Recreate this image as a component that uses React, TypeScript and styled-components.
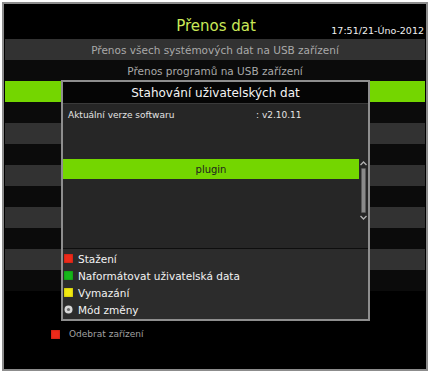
import React from "react";
import styled, { createGlobalStyle } from "styled-components";

const GlobalStyle = createGlobalStyle`
	html, body {
		margin: 0;
		padding: 0;
		background: #ffffff;
	}
	* {
		box-sizing: border-box;
	}
`;

const rows = [
	"Přenos všech systémových dat na USB zařízení",
	"Přenos programů na USB zařízení",
	"",
	"",
	"",
	"",
	"",
	"",
	"",
	"",
	"",
	"",
];

const legend = [
	{ color: "#ee2a1a", label: "Stažení" },
	{ color: "#16b81a", label: "Naformátovat uživatelská data" },
	{ color: "#f2ea10", label: "Vymazání" },
	{ color: "gear", label: "Mód změny" },
];

const App: React.FC = () => {
	return (
		<>
			<GlobalStyle />
			<Frame>
				<Header>
					<Title>Přenos dat</Title>
					<Clock>17:51/21-Úno-2012</Clock>
				</Header>
				<List>
					{rows.map((text, index) => (
						<Row key={index} dark={index % 2 === 1} selected={index === 2}>
							{text}
						</Row>
					))}
				</List>
				<Footer>
					<Swatch color="#ee2a1a" />
					<FooterText>Odebrat zařízení</FooterText>
				</Footer>

				<Dialog>
					<DialogHeader>Stahování uživatelských dat</DialogHeader>
					<DialogBody>
						<Info>
							<span>Aktuální verze softwaru</span>
							<span>: v2.10.11</span>
						</Info>
						<ListArea>
							<Items>
								<Item>plugin</Item>
							</Items>
							<Scrollbar>
								<svg width="9" height="7" viewBox="0 0 9 7">
									<path d="M1.5 5 L4.5 2 L7.5 5" stroke="#b0b0b0" strokeWidth="1.4" fill="none" />
								</svg>
								<Thumb />
								<svg width="9" height="7" viewBox="0 0 9 7">
									<path d="M1.5 2 L4.5 5 L7.5 2" stroke="#b0b0b0" strokeWidth="1.4" fill="none" />
								</svg>
							</Scrollbar>
						</ListArea>
					</DialogBody>
					<Legend>
						{legend.map((item) => (
							<LegendItem key={item.label}>
								{item.color === "gear" ? (
									<svg width="9" height="9" viewBox="0 0 9 9">
										<circle cx="4.5" cy="4.5" r="4" fill="#d8d8d8" />
										<circle cx="4.5" cy="4.5" r="1.6" fill="#6a6a6a" />
									</svg>
								) : (
									<Swatch color={item.color} />
								)}
								<span>{item.label}</span>
							</LegendItem>
						))}
					</Legend>
				</Dialog>
			</Frame>
		</>
	);
};

export default App;

const Frame = styled.div`
	position: relative;
	margin: 2px;
	width: 426px;
	height: 369px;
	border: 2px solid #8c8c8c;
	background: #000000;
	font-family: "DejaVu Sans", Verdana, sans-serif;
	display: flex;
	flex-direction: column;
`;

const Header = styled.div`
	height: 35px;
	display: flex;
	align-items: center;
	justify-content: center;
	position: relative;
`;

const Title = styled.div`
	font-size: 15px;
	color: #c9e858;
	margin-top: 8px;
	margin-left: 2px;
`;

const Clock = styled.div`
	position: absolute;
	right: 2px;
	bottom: 3px;
	font-size: 9.5px;
	color: #f0f0f0;
`;

const List = styled.div`
	display: flex;
	flex-direction: column;
	padding: 0 1px;
`;

type RowProps = { dark: boolean; selected: boolean };

const Row = styled.div<RowProps>`
	height: 21px;
	display: flex;
	align-items: center;
	justify-content: center;
	font-size: 10.5px;
	color: #a9a9a9;
	background: ${(p) => (p.selected ? "#74d600" : p.dark ? "#0b0b0b" : "#323232")};
`;

const Footer = styled.div`
	display: flex;
	align-items: center;
	gap: 9px;
	padding: 38px 0 0 47px;
`;

const Swatch = styled.div<{ color: string }>`
	width: 9px;
	height: 9px;
	background: ${(p) => p.color};
	box-shadow: inset 0 0 2px rgba(0, 0, 0, 0.35);
	flex-shrink: 0;
`;

const FooterText = styled.span`
	font-size: 9px;
	color: #a0a0a0;
`;

const Dialog = styled.div`
	position: absolute;
	left: 57px;
	top: 76px;
	width: 309px;
	height: 241px;
	border: 2px solid #8e8e8e;
	background: #262626;
	display: flex;
	flex-direction: column;
`;

const DialogHeader = styled.div`
	height: 22px;
	background: #050505;
	border-bottom: 1px solid #3a3a3a;
	color: #f4f4f4;
	font-size: 12px;
	display: flex;
	align-items: center;
	justify-content: center;
`;

const DialogBody = styled.div`
	height: 145px;
	border-bottom: 1px solid #0e0e0e;
	display: flex;
	flex-direction: column;
`;

const Info = styled.div`
	height: 55px;
	display: grid;
	grid-template-columns: 188px 1fr;
	padding: 6px 5px 0;
	font-size: 9px;
	color: #e4e4e4;
`;

const ListArea = styled.div`
	height: 62px;
	display: flex;
`;

const Items = styled.div`
	flex: 1;
	display: flex;
	flex-direction: column;
`;

const Item = styled.div`
	height: 20px;
	background: #74d600;
	color: #1e1e1e;
	font-size: 10px;
	display: flex;
	align-items: center;
	justify-content: center;
`;

const Scrollbar = styled.div`
	width: 9px;
	display: flex;
	flex-direction: column;
	align-items: center;
	justify-content: space-between;
	padding: 1px 0 0;
`;

const Thumb = styled.div`
	flex: 1;
	width: 5px;
	margin: 1px 0;
	background: #8a8a8a;
	border: 1px solid #5a5a5a;
	border-radius: 1px;
`;

const Legend = styled.div`
	flex: 1;
	background: #2c2c2c;
	padding: 1px 0 0 1px;
	display: flex;
	flex-direction: column;
`;

const LegendItem = styled.div`
	height: 17px;
	display: flex;
	align-items: center;
	gap: 5px;
	font-size: 10.5px;
	color: #f2f2f2;
`;
